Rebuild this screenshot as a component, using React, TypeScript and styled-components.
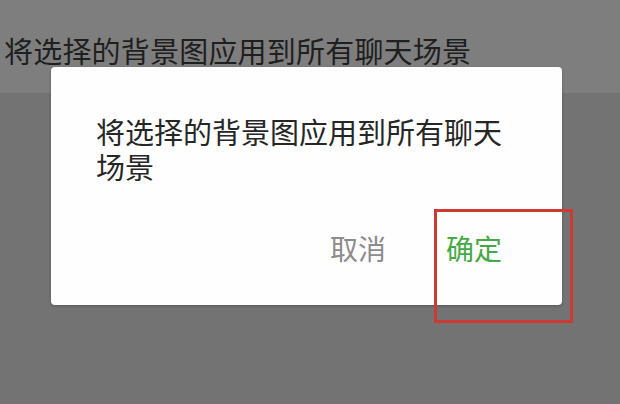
import React from 'react'
import styled, { createGlobalStyle } from 'styled-components'

const GlobalStyle = createGlobalStyle`
  html, body {
    margin: 0;
    padding: 0;
  }
  body {
    font-family: "Noto Sans CJK SC", "Noto Sans", sans-serif;
  }
`

const Screen = styled.div`
  position: relative;
  width: 620px;
  height: 404px;
  overflow: hidden;
  background: #737373;
  display: flex;
  flex-direction: column;
`

const Header = styled.div`
  height: 93px;
  background: #7e7e7e;
  display: flex;
  align-items: flex-start;
  padding: 33px 0 0 4px;
  box-sizing: border-box;
`

const Title = styled.h1`
  margin: 0;
  font-size: 29px;
  line-height: 34px;
  font-weight: 400;
  letter-spacing: 0.2px;
  color: #1f1f1f;
  white-space: nowrap;
`

const Dialog = styled.div`
  position: absolute;
  left: 51px;
  top: 67px;
  width: 511px;
  height: 238px;
  box-sizing: border-box;
  background: #fefefe;
  border-radius: 4px;
  box-shadow: 0 1px 3px rgba(0, 0, 0, 0.25);
  padding: 47px 50px 0 45px;
  display: flex;
  flex-direction: column;
`

const Message = styled.p`
  margin: 0;
  font-size: 29px;
  line-height: 35px;
  color: #262626;
`

const Actions = styled.div`
  display: flex;
  justify-content: flex-end;
  gap: 60px;
  margin-top: 49px;
  padding-right: 10px;
`

const ActionButton = styled.button<{ $primary?: boolean }>`
  border: none;
  background: none;
  padding: 0;
  font-family: inherit;
  font-size: 28px;
  line-height: 30px;
  color: ${p => (p.$primary ? '#46a946' : '#8c8c8c')};
  cursor: pointer;
`

const Highlight = styled.div`
  position: absolute;
  left: 434px;
  top: 209px;
  width: 139px;
  height: 114px;
  box-sizing: border-box;
  border: 3px solid #cf3934;
  pointer-events: none;
`

const App = () => {
  return (
    <>
      <GlobalStyle />
      <Screen>
        <Header>
          <Title>将选择的背景图应用到所有聊天场景</Title>
        </Header>
        <Dialog>
          <Message>将选择的背景图应用到所有聊天场景</Message>
          <Actions>
            <ActionButton>取消</ActionButton>
            <ActionButton $primary>确定</ActionButton>
          </Actions>
        </Dialog>
        <Highlight />
      </Screen>
    </>
  )
}

export default App
